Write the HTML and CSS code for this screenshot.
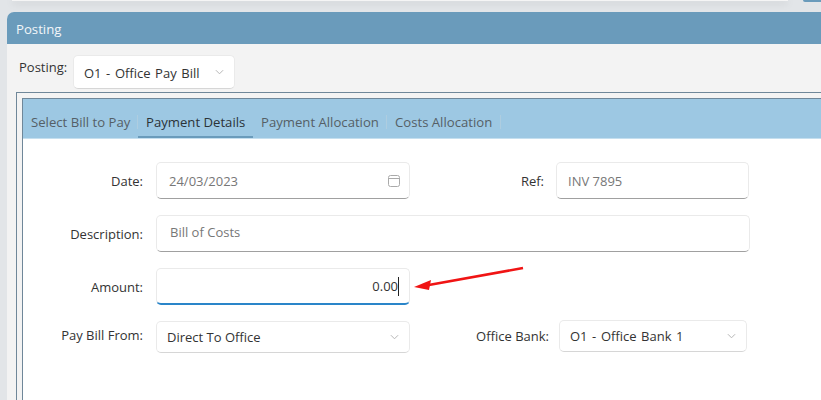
FILE: index.html
```html
<!DOCTYPE html>
<html lang="en">
<head>
<meta charset="utf-8">
<title>Posting</title>
<link rel="stylesheet" href="styles.css">
</head>
<body>
<div class="topbar"><div class="topcard"></div><div class="topbtn"></div></div>
<section class="panel">
  <header class="panel-head">Posting</header>
  <div class="panel-body">
    <div class="posting-row">
      <span class="posting-label">Posting:</span>
      <div class="field select posting-select"><span class="code-text">O1 - Office Pay Bill</span>
        <svg class="chev" viewBox="0 0 10 6"><path d="M1 1l4 4 4-4"/></svg></div>
    </div>
    <div class="outer">
      <div class="inner">
        <nav class="tabs">
          <span class="tab sep">Select Bill to Pay</span>
          <span class="tab active">Payment Details</span>
          <span class="tab sep">Payment Allocation</span>
          <span class="tab sep">Costs Allocation</span>
        </nav>
        <div class="form">
          <div class="row r-date">
            <label class="lbl">Date:</label>
            <div class="field input w-left muted"><span>24/03/2023</span>
              <svg class="cal" viewBox="0 0 12 12"><rect x="0.5" y="0.5" width="11" height="11" rx="2"/><path d="M0.5 3.5h11"/></svg></div>
            <label class="lbl ref-lbl">Ref:</label>
            <div class="field input w-ref muted"><span>INV 7895</span></div>
          </div>
          <div class="row r-desc">
            <label class="lbl">Description:</label>
            <div class="field input w-full muted desc"><span>Bill of Costs</span></div>
          </div>
          <div class="row r-amount">
            <label class="lbl">Amount:</label>
            <div class="field input w-left focus"><span class="amount">0.00</span></div>
            <svg class="arrow" viewBox="0 0 115 30"><path class="arrow-line" d="M109 2L12 19.5"/><path class="arrow-head" d="M0 21L17 14L15 24Z"/></svg>
          </div>
          <div class="row r-pay">
            <label class="lbl pay-lbl">Pay Bill From:</label>
            <div class="field select w-left"><span>Direct To Office</span>
              <svg class="chev" viewBox="0 0 10 6"><path d="M1 1l4 4 4-4"/></svg></div>
            <label class="lbl bank-lbl">Office Bank:</label>
            <div class="field select w-bank"><span class="code-text">O1 - Office Bank 1</span>
              <svg class="chev" viewBox="0 0 10 6"><path d="M1 1l4 4 4-4"/></svg></div>
          </div>
        </div>
      </div>
    </div>
  </div>
</section>
</body>
</html>
```
FILE: styles.css
```css
* { box-sizing: border-box; }
html, body { margin: 0; padding: 0; }
body {
  width: 821px; height: 400px; overflow: hidden;
  background: #e2e5e8;
  font-family: "Open Sans", "Noto Sans", sans-serif;
  font-size: 13px; color: #333;
}
.topbar { height: 12px; display: flex; align-items: flex-start; gap: 15px; }
.topcard {
  margin-left: 12px; width: 776px; height: 1px;
  background: #f5f5f5; box-shadow: 0 2px 7px rgba(0,0,0,.28);
}
.topbtn { width: 18px; height: 2px; background: #6a9bbb; border-radius: 0 0 0 2px; }
.panel { margin-left: 7px; height: 388px; background: #f3f3f3; border-radius: 7px 0 0 0; overflow: hidden; }
.panel-head {
  height: 32px; background: #6a9bbb; color: #f2f6f9;
  padding-left: 9px; line-height: 34px; font-size: 13.2px;
}
.panel-body { padding: 11px 0 0 9px; }
.posting-row { display: flex; align-items: flex-start; height: 37px; }
.posting-label { width: 54px; padding-left: 3px; margin-top: 2px; line-height: 20px; color: #333; }
.field {
  display: flex; align-items: center; background: #fff; border-radius: 5px;
  border: 1px solid #eaeaea; flex: none; color: #333; white-space: nowrap;
}
.select { border-bottom-color: #d6d6d6; padding-left: 10px; padding-right: 10px; justify-content: space-between; }
.input { border-bottom: 1px solid #a0a0a0; padding: 0 12px; justify-content: space-between; }
.posting-select { width: 162px; height: 34px; margin-left: 3px; }
.posting-select .code-text { padding-top: 2px; }
.code-text { word-spacing: 1.2px; }
.chev { width: 9px; height: 6px; fill: none; stroke: #b5b5b5; stroke-width: 1.1; }
.outer { border: 1px solid #6f8799; border-right: 0; padding: 5px 0 0 5px; height: 320px; margin-right: -1px; }
.inner { border: 1px solid #6f8799; border-right: 0; border-bottom: 0; background: #fff; height: 320px; }
.tabs {
  height: 40px; background: #9dc8e3; padding-top: 12px;
  display: flex; align-items: flex-start; border-bottom: 1px solid #c5dfef;
}
.tab {
  height: 27px; line-height: 22px; padding: 0 8px; color: #555f66; font-size: 13.15px;
  position: relative; flex: none; white-space: nowrap;
}
.tab:nth-child(1) { width: 115px; }
.tab:nth-child(2) { width: 115px; }
.tab:nth-child(3) { width: 134px; }
.tab:nth-child(4) { width: 114px; }
.tab.active { color: #2b3338; border-bottom: 2px solid #6a9bbb; }
.tab.sep::after {
  content: ""; position: absolute; right: 0; top: 4px; height: 14px; width: 1px; background: #aecde0;
}
.form { padding-top: 23px; }
.row { display: flex; align-items: center; position: relative; }
.lbl { width: 120px; text-align: right; flex: none; margin-right: 13px; color: #333; white-space: nowrap; }
.ref-lbl { width: 134px; margin-right: 12px; }
.bank-lbl { width: 139px; margin-right: 10px; margin-bottom: 2px; }
.pay-lbl { margin-bottom: 4px; }
.w-left { width: 254px; }
.w-ref { width: 193px; }
.w-full { width: 594px; }
.w-bank { width: 188px; margin-bottom: 2px; }
.r-date, .r-desc, .r-amount { height: 37px; margin-bottom: 16px; }
.r-date .field, .r-desc .field, .r-amount .field { height: 37px; }
.r-pay { height: 32px; }
.r-pay .field { height: 32px; }
.muted { color: #777; }
.desc { padding-left: 13px; }
.desc span { margin-bottom: 3px; }
.w-ref { padding-left: 11px; }
.cal { width: 12px; height: 12px; fill: none; stroke: #aaa; stroke-width: 1; margin-right: -3px; }
.focus { border-bottom: 2px solid #2a85c9; justify-content: flex-end; padding-right: 10px; }
.amount { border-right: 1px solid #222; line-height: 19px; }
.arrow { position: absolute; left: 391px; top: -2px; width: 115px; height: 30px; }
.arrow-line { stroke: #f01414; stroke-width: 2.6; fill: none; }
.arrow-head { fill: #f01414; }
```
